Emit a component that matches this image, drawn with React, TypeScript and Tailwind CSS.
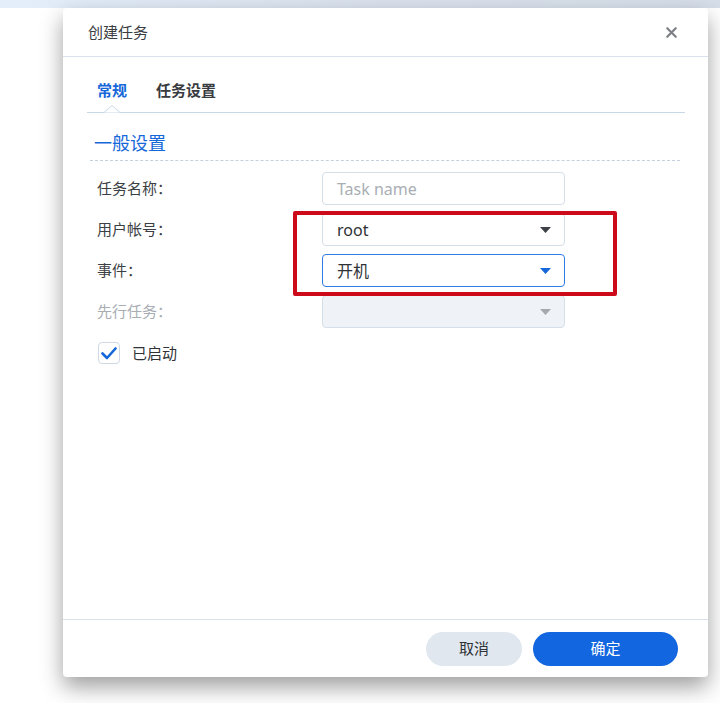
import { X } from "lucide-react";

const font = { fontFamily: '"Noto Sans", "Noto Sans CJK SC", sans-serif' };

function Caret({ color }: { color: string }) {
  return (
    <svg width="11" height="6" viewBox="0 0 11 6" className="shrink-0">
      <path d="M0 0 L11 0 L5.5 6 Z" fill={color} />
    </svg>
  );
}

function Row({ label, muted, children }: { label: string; muted?: boolean; children: React.ReactNode }) {
  return (
    <div className="flex items-center h-[33px]">
      <div className={`w-[235px] pl-[10px] text-[15px] ${muted ? "text-[#a8adb3]" : "text-[#3c3f44]"}`}>{label}</div>
      {children}
    </div>
  );
}

export default function App() {
  return (
    <div className="w-[720px] h-[703px] bg-white overflow-hidden" style={font}>
      <div className="h-[8px] bg-gradient-to-r from-[#e4eefb] via-[#dbe3ee] to-[#d6dee9]" />
      <div className="ml-[63px] w-[645px] h-[669px] bg-white rounded-[4px] flex flex-col shadow-[0_10px_22px_rgba(0,0,0,0.38)]">
        <div className="h-[49px] flex items-center justify-between pl-[25px] pr-[28px] border-b border-[#d9e2ec]">
          <span className="text-[15px] text-[#3a3d42]">创建任务</span>
          <X size={17} strokeWidth={3} className="text-[#7b7f85]" />
        </div>
        <div className="flex-1 pl-[24px] pr-[23px] relative">
          <div className="h-[56px] flex items-end pb-[11px] gap-[29px] pl-[10px] border-b border-[#c9d8e6] relative">
            <span className="text-[15px] font-bold text-[#1667d9]">常规</span>
            <span className="text-[15px] font-bold text-[#383b40]">任务设置</span>
            <svg width="16" height="8" viewBox="0 0 16 8" className="absolute left-[17px] bottom-[-1px]">
              <path d="M0 7.5 L8 0.5 L16 7.5" fill="white" stroke="#c9d8e6" strokeWidth="1" />
            </svg>
          </div>
          <div className="mt-[17px] pl-[7px] text-[18px] leading-[26px] text-[#1667d9]">一般设置</div>
          <div className="mt-[4px] ml-[3px] mr-[5px] border-t border-dashed border-[#c5d0dc]" />
          <div className="mt-[11px] flex flex-col gap-[8px]">
            <Row label="任务名称：">
              <div className="w-[243px] h-[33px] rounded-[4px] border border-[#d5dfe9] flex items-center px-[14px] text-[16px] text-[#a9aeb4]">Task name</div>
            </Row>
            <Row label="用户帐号：">
              <div className="w-[243px] h-[33px] rounded-[4px] border border-[#d5dfe9] flex items-center justify-between pl-[14px] pr-[13px] text-[16px] text-[#2f3236]">
                <span>root</span>
                <Caret color="#3d4147" />
              </div>
            </Row>
            <Row label="事件：">
              <div className="w-[243px] h-[33px] rounded-[4px] border border-[#2f7ae5] flex items-center justify-between pl-[14px] pr-[13px] text-[16px] text-[#2f3236]">
                <span>开机</span>
                <Caret color="#1667d9" />
              </div>
            </Row>
            <Row label="先行任务：" muted>
              <div className="w-[243px] h-[33px] rounded-[4px] border border-[#d5dfe9] bg-[#eff3f7] flex items-center justify-end pr-[13px]">
                <Caret color="#a4a9b0" />
              </div>
            </Row>
          </div>
          <div className="mt-[14px] ml-[11px] flex items-center gap-[12px]">
            <div className="w-[22px] h-[22px] rounded-[4px] border border-[#cfd9e4] flex items-center justify-center">
              <svg width="16" height="13" viewBox="0 0 16 13">
                <path d="M1.5 6.5 L6 11 L14.5 1.5" fill="none" stroke="#1667d9" strokeWidth="2.6" strokeLinecap="round" strokeLinejoin="round" />
              </svg>
            </div>
            <span className="text-[15px] text-[#2f3236]">已启动</span>
          </div>
          <div className="absolute left-[230px] top-[154px] w-[324px] h-[85px] border-[4px] border-[#cc0a1a] rounded-[2px]" />
        </div>
        <div className="h-[58px] border-t border-[#d9e2ec] flex items-center justify-end gap-[11px] pr-[30px]">
          <button className="w-[96px] h-[34px] rounded-full bg-[#e1e7ef] text-[15px] text-[#2f3236]">取消</button>
          <button className="w-[145px] h-[34px] rounded-full bg-[#1266e0] text-[15px] text-white">确定</button>
        </div>
      </div>
    </div>
  );
}
